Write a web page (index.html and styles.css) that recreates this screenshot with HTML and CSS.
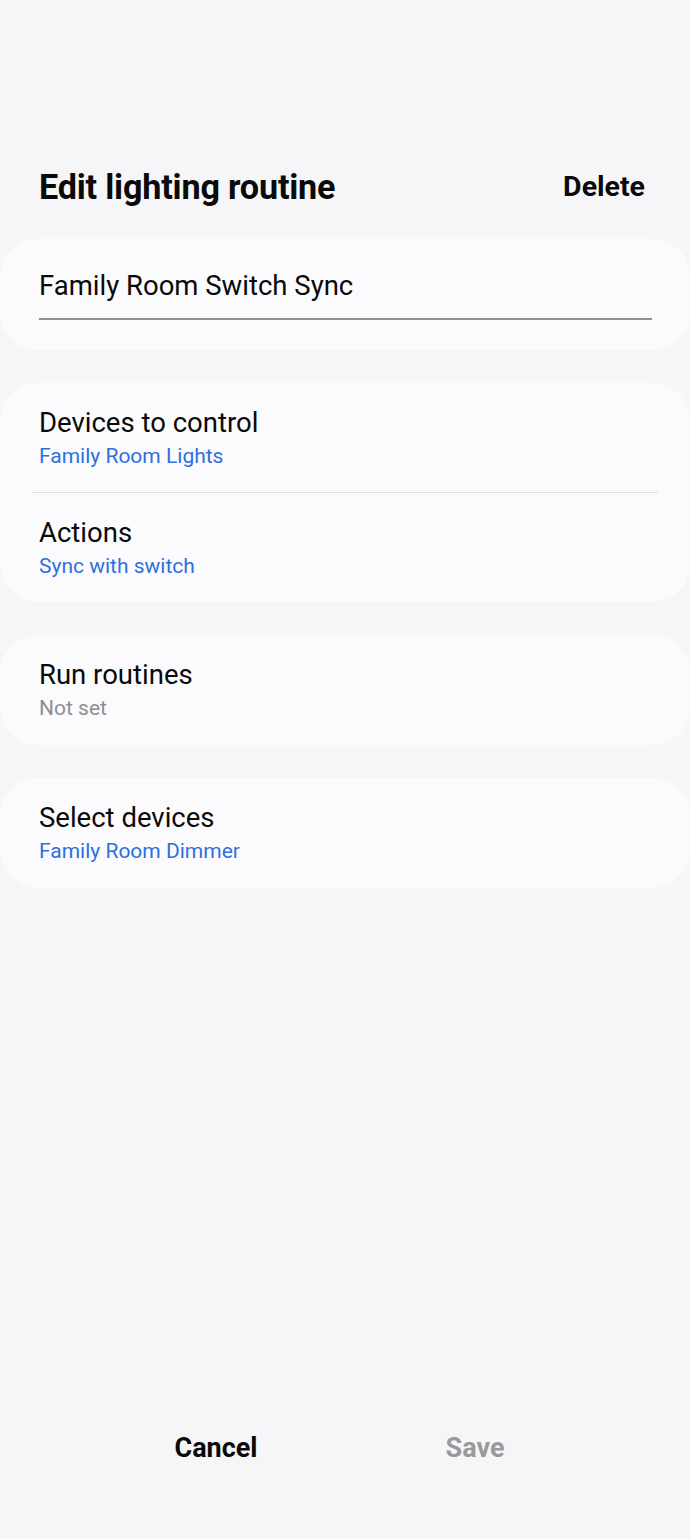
FILE: index.html
```html
<!DOCTYPE html>
<html>
<head>
<meta charset="utf-8">
<link rel="stylesheet" href="styles.css">
</head>
<body>
<div class="page">
  <header class="header">
    <h1 class="title">Edit lighting routine</h1>
    <span class="delete">Delete</span>
  </header>
  <main class="content">
    <section class="card name-card">
      <div class="name-text">Family Room Switch Sync</div>
      <div class="underline"></div>
    </section>
    <section class="card">
      <div class="row">
        <div class="row-title">Devices to control</div>
        <div class="row-sub blue">Family Room Lights</div>
      </div>
      <div class="divider"></div>
      <div class="row row-last">
        <div class="row-title">Actions</div>
        <div class="row-sub blue">Sync with switch</div>
      </div>
    </section>
    <section class="card">
      <div class="row">
        <div class="row-title">Run routines</div>
        <div class="row-sub gray">Not set</div>
      </div>
    </section>
    <section class="card">
      <div class="row">
        <div class="row-title">Select devices</div>
        <div class="row-sub blue">Family Room Dimmer</div>
      </div>
    </section>
  </main>
  <footer class="footer">
    <span class="btn cancel">Cancel</span>
    <span class="btn save">Save</span>
  </footer>
</div>
</body>
</html>
```

FILE: styles.css
```css
* { box-sizing: border-box; }
html, body {
  margin: 0;
  padding: 0;
  background: #f6f6f8;
  font-family: Roboto, "Liberation Sans", sans-serif;
  color: #0a0a0a;
}
.page {
  width: 690px;
  height: 1539px;
  display: flex;
  flex-direction: column;
}
.header {
  display: flex;
  justify-content: space-between;
  align-items: center;
  padding: 167px 45px 0 39px;
  height: 207px;
}
.title {
  margin: 0;
  font-size: 34.2px;
  font-weight: 700;
  line-height: 40px;
  letter-spacing: -0.2px;
}
.delete {
  font-size: 28.5px;
  font-weight: 700;
  line-height: 40px;
}
.content {
  display: flex;
  flex-direction: column;
  gap: 33px;
  padding-top: 32px;
}
.card {
  background: #fbfbfd;
  border-radius: 38px;
}
.name-card {
  padding: 31px 38px 30px 39px;
  height: 111px;
}
.name-text {
  font-size: 27.5px;
  line-height: 32px;
}
.underline {
  margin-top: 16px;
  height: 2px;
  background: #8e8e93;
}
.row {
  padding: 24px 39px;
  height: 110px;
}
.row-last {
  height: 109px;
}
.row-title {
  font-size: 27.5px;
  line-height: 32px;
}
.row-sub {
  margin-top: 4px;
  font-size: 21px;
  line-height: 26px;
}
.blue { color: #2f6fdf; }
.gray { color: #8e8e92; }
.divider {
  height: 1px;
  margin: -1px 32px 0 32px;
  background: #dedee2;
}
.footer {
  margin-top: auto;
  margin-bottom: 61px;
  height: 60px;
  display: flex;
  align-items: center;
  padding-left: 116px;
  gap: 59px;
}
.btn {
  width: 200px;
  text-align: center;
  font-size: 27px;
  font-weight: 700;
}
.cancel { color: #0a0a0a; }
.save { color: #9a9a9c; }
```
